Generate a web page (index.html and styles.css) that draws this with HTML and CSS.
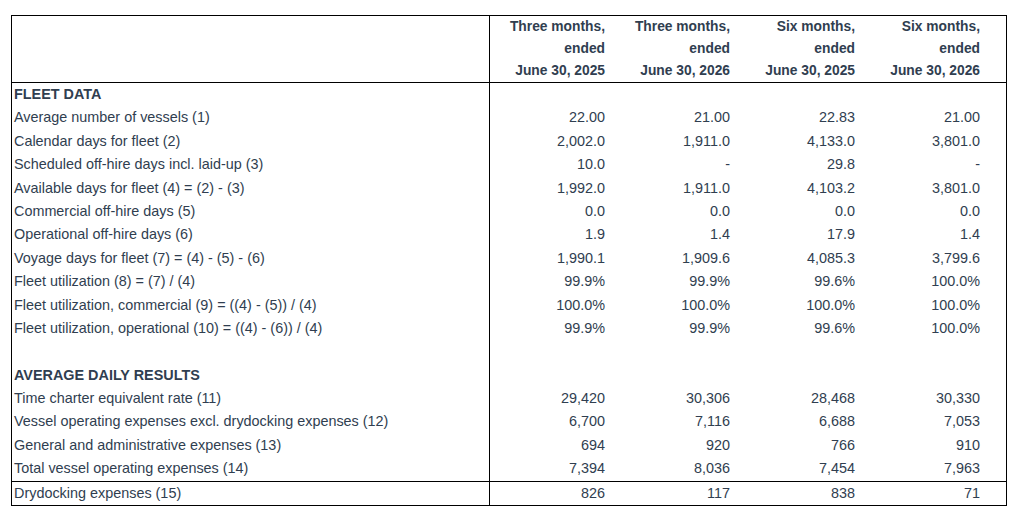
FILE: index.html
```html
<!DOCTYPE html>
<html lang="en">
<head>
<meta charset="utf-8">
<title>Fleet data</title>
<link rel="stylesheet" href="styles.css">
</head>
<body>
<div class="sheet">
  <div class="row head">
    <div class="label"></div>
    <div class="num">Three months,<br>ended<br>June 30, 2025</div>
    <div class="num">Three months,<br>ended<br>June 30, 2026</div>
    <div class="num">Six months,<br>ended<br>June 30, 2025</div>
    <div class="num">Six months,<br>ended<br>June 30, 2026</div>
    <div class="spare"></div>
  </div>
  <div class="body">
    <div class="row"><div class="label section">FLEET DATA</div><div class="num"></div><div class="num"></div><div class="num"></div><div class="num"></div><div class="spare"></div></div>
    <div class="row"><div class="label">Average number of vessels (1)</div><div class="num">22.00</div><div class="num">21.00</div><div class="num">22.83</div><div class="num">21.00</div><div class="spare"></div></div>
    <div class="row"><div class="label">Calendar days for fleet (2)</div><div class="num">2,002.0</div><div class="num">1,911.0</div><div class="num">4,133.0</div><div class="num">3,801.0</div><div class="spare"></div></div>
    <div class="row"><div class="label">Scheduled off-hire days incl. laid-up (3)</div><div class="num">10.0</div><div class="num">-</div><div class="num">29.8</div><div class="num">-</div><div class="spare"></div></div>
    <div class="row"><div class="label">Available days for fleet (4) = (2) - (3)</div><div class="num">1,992.0</div><div class="num">1,911.0</div><div class="num">4,103.2</div><div class="num">3,801.0</div><div class="spare"></div></div>
    <div class="row"><div class="label">Commercial off-hire days (5)</div><div class="num">0.0</div><div class="num">0.0</div><div class="num">0.0</div><div class="num">0.0</div><div class="spare"></div></div>
    <div class="row"><div class="label">Operational off-hire days (6)</div><div class="num">1.9</div><div class="num">1.4</div><div class="num">17.9</div><div class="num">1.4</div><div class="spare"></div></div>
    <div class="row"><div class="label">Voyage days for fleet (7) = (4) - (5) - (6)</div><div class="num">1,990.1</div><div class="num">1,909.6</div><div class="num">4,085.3</div><div class="num">3,799.6</div><div class="spare"></div></div>
    <div class="row"><div class="label">Fleet utilization (8) = (7) / (4)</div><div class="num">99.9%</div><div class="num">99.9%</div><div class="num">99.6%</div><div class="num">100.0%</div><div class="spare"></div></div>
    <div class="row"><div class="label">Fleet utilization, commercial (9) = ((4) - (5)) / (4)</div><div class="num">100.0%</div><div class="num">100.0%</div><div class="num">100.0%</div><div class="num">100.0%</div><div class="spare"></div></div>
    <div class="row"><div class="label">Fleet utilization, operational (10) = ((4) - (6)) / (4)</div><div class="num">99.9%</div><div class="num">99.9%</div><div class="num">99.6%</div><div class="num">100.0%</div><div class="spare"></div></div>
    <div class="row"><div class="label"></div><div class="num"></div><div class="num"></div><div class="num"></div><div class="num"></div><div class="spare"></div></div>
    <div class="row"><div class="label section">AVERAGE DAILY RESULTS</div><div class="num"></div><div class="num"></div><div class="num"></div><div class="num"></div><div class="spare"></div></div>
    <div class="row"><div class="label">Time charter equivalent rate (11)</div><div class="num">29,420</div><div class="num">30,306</div><div class="num">28,468</div><div class="num">30,330</div><div class="spare"></div></div>
    <div class="row"><div class="label">Vessel operating expenses excl. drydocking expenses (12)</div><div class="num">6,700</div><div class="num">7,116</div><div class="num">6,688</div><div class="num">7,053</div><div class="spare"></div></div>
    <div class="row"><div class="label">General and administrative expenses (13)</div><div class="num">694</div><div class="num">920</div><div class="num">766</div><div class="num">910</div><div class="spare"></div></div>
    <div class="row"><div class="label">Total vessel operating expenses (14)</div><div class="num">7,394</div><div class="num">8,036</div><div class="num">7,454</div><div class="num">7,963</div><div class="spare"></div></div>
  </div>
  <div class="row foot"><div class="label">Drydocking expenses (15)</div><div class="num">826</div><div class="num">117</div><div class="num">838</div><div class="num">71</div><div class="spare"></div></div>
</div>
</body>
</html>
```

FILE: styles.css
```css
html, body {
  margin: 0;
  padding: 0;
  background: #ffffff;
}

body {
  font-family: "Liberation Sans", Arial, sans-serif;
  font-size: 14.4px;
  color: #303e50;
}

.sheet {
  margin: 15px 0 0 11px;
  width: 996px;
  border: 1px solid #000000;
  box-sizing: border-box;
}

.row {
  display: grid;
  grid-template-columns: 478px 125px 125px 125px 125px 1fr;
  height: 23.4px;
  line-height: 23.4px;
}

.label {
  padding-left: 2px;
  border-right: 1px solid #000000;
  white-space: nowrap;
}

.num {
  text-align: right;
  padding-right: 10px;
  white-space: nowrap;
}

.section {
  font-weight: bold;
}

.head {
  height: auto;
  line-height: 22px;
  font-weight: bold;
  font-size: 13.8px;
  border-bottom: 1px solid #000000;
}

.head .label {
  height: 66px;
}

.foot {
  border-top: 1px solid #000000;
  height: 23px;
  line-height: 23px;
}
```
